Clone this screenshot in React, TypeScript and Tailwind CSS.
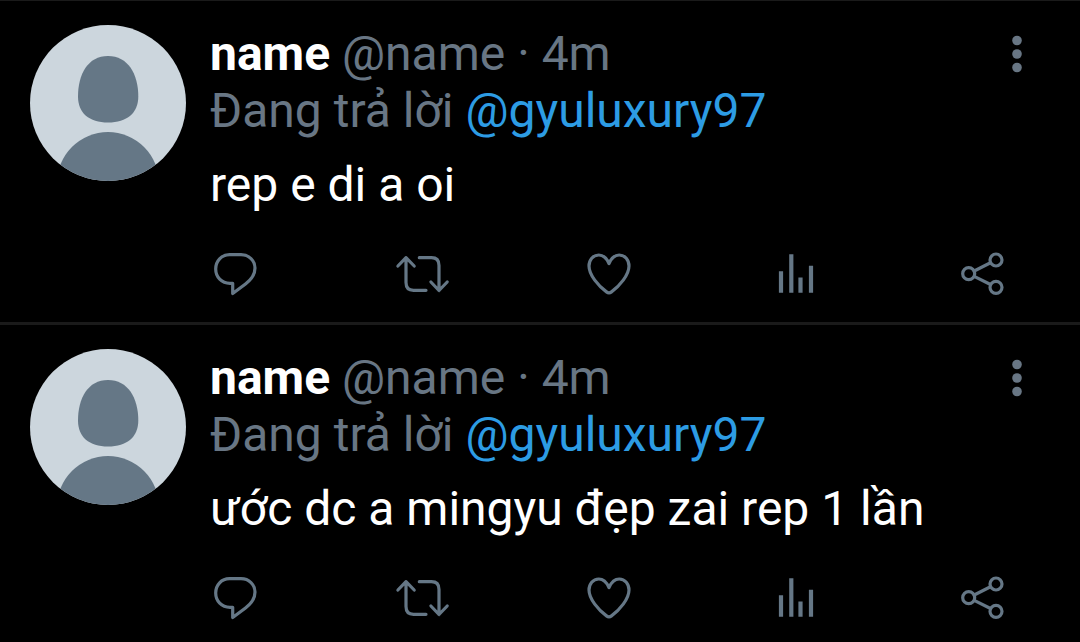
import type { ReactNode } from "react";

type Tweet = {
  id: number;
  name: string;
  handle: string;
  time: string;
  replyTo: string;
  text: string;
};

const tweets: Tweet[] = [
  { id: 1, name: "name", handle: "@name", time: "4m", replyTo: "@gyuluxury97", text: "rep e di a oi" },
  { id: 2, name: "name", handle: "@name", time: "4m", replyTo: "@gyuluxury97", text: "ước dc a mingyu đẹp zai rep 1 lần" },
];

function Avatar() {
  return (
    <svg viewBox="0 0 156 156" className="size-[156px] shrink-0 rounded-full bg-[#ccd6dd]" aria-hidden="true">
      <g fill="#657786">
        <path d="M78 31C98 31 108.300 49 108.300 71.500C108.300 88 97 97.500 78 97.500C59 97.500 48 88 48 71.500C48 49 58 31 78 31Z" />
        <circle cx="78" cy="158" r="51" />
      </g>
    </svg>
  );
}

function Action({ label, children }: { label: string; children: ReactNode }) {
  return (
    <button type="button" aria-label={label} className="cursor-pointer">
      <svg
        viewBox="0 0 50 50"
        className="size-[50px] overflow-visible"
        fill="none"
        stroke="currentColor"
        strokeWidth="3.2"
        strokeLinecap="round"
        strokeLinejoin="round"
      >
        {children}
      </svg>
    </button>
  );
}

function Actions() {
  return (
    <div className="mt-9 mr-6 flex justify-between text-[#657786]">
      <Action label="Trả lời">
        <path d="M19.500 5.700H31C39 5.700 45 11.500 45 19C45 26 41.500 30.500 35.500 35L22.700 44.500V34.300H20C11.500 34.300 5.700 28 5.700 20C5.700 12 11.500 5.700 19.500 5.700Z" />
      </Action>
      <Action label="Tweet lại">
        <path d="M.9 17L9 8.600L17.200 17M9 8.600V33.500Q9 41.300 16.500 41.300H29" />
        <path d="M22.300 8.700H34.500Q42 8.700 42 16.500V41.500M33.900 33L42 41.500L50.200 33" />
      </Action>
      <Action label="Thích">
        <path d="M25 14.500C22.500 9 19 6 14.800 6C9 6 5 11 5 17C5 26 14.500 37 22.500 42.900Q25 44.700 27.500 42.900C35.500 37 45 26 45 17C45 11 41 6 35.200 6C31 6 27.500 9 25 14.500Z" />
      </Action>
      <Action label="Thống kê">
        <path strokeWidth="4.2" strokeLinecap="butt" d="M10 22.300V43.700M20.300 5.300V43.700M29.500 28.500V43.700M40 16.700V43.700" />
      </Action>
      <Action label="Chia sẻ">
        <circle cx="10.7" cy="24.7" r="6" />
        <circle cx="38" cy="11" r="6" />
        <circle cx="38" cy="38.3" r="6" />
        <path d="M16.200 22L32.500 13.800M16.200 27.400L32.500 35.500" />
      </Action>
    </div>
  );
}

function TweetItem({ tweet }: { tweet: Tweet }) {
  return (
    <article className="flex gap-6 border-b-3 border-[#1a1a1a] pt-6 pr-12 pb-[23px] pl-[30px] last:border-b-0 last:pb-4">
      <Avatar />
      <div className="min-w-0 grow">
        <div className="flex items-center justify-between">
          <p className="text-[#687684]">
            <span className="font-bold text-white">{tweet.name}</span> {tweet.handle} · {tweet.time}
          </p>
          <button type="button" aria-label="Thêm" className="cursor-pointer text-[#687684]">
            <svg viewBox="0 0 30 50" className="h-[50px] w-[30px]" fill="currentColor">
              <circle cx="15" cy="11.5" r="4.8" />
              <circle cx="15" cy="25" r="4.8" />
              <circle cx="15" cy="38.500" r="4.8" />
            </svg>
          </button>
        </div>
        <p className="text-[#687684]">
          Đang trả lời{" "}
          <a href="#" className="text-[#2d9ce4]">
            {tweet.replyTo}
          </a>
        </p>
        <p className="mt-[17px] text-white">{tweet.text}</p>
        <Actions />
      </div>
    </article>
  );
}

export default function App() {
  return (
    <main className="min-h-screen border-t border-[#1a1a1a] bg-black font-[Roboto,sans-serif] text-[48px] leading-[57px]">
      {tweets.map((tweet) => (
        <TweetItem key={tweet.id} tweet={tweet} />
      ))}
    </main>
  );
}
